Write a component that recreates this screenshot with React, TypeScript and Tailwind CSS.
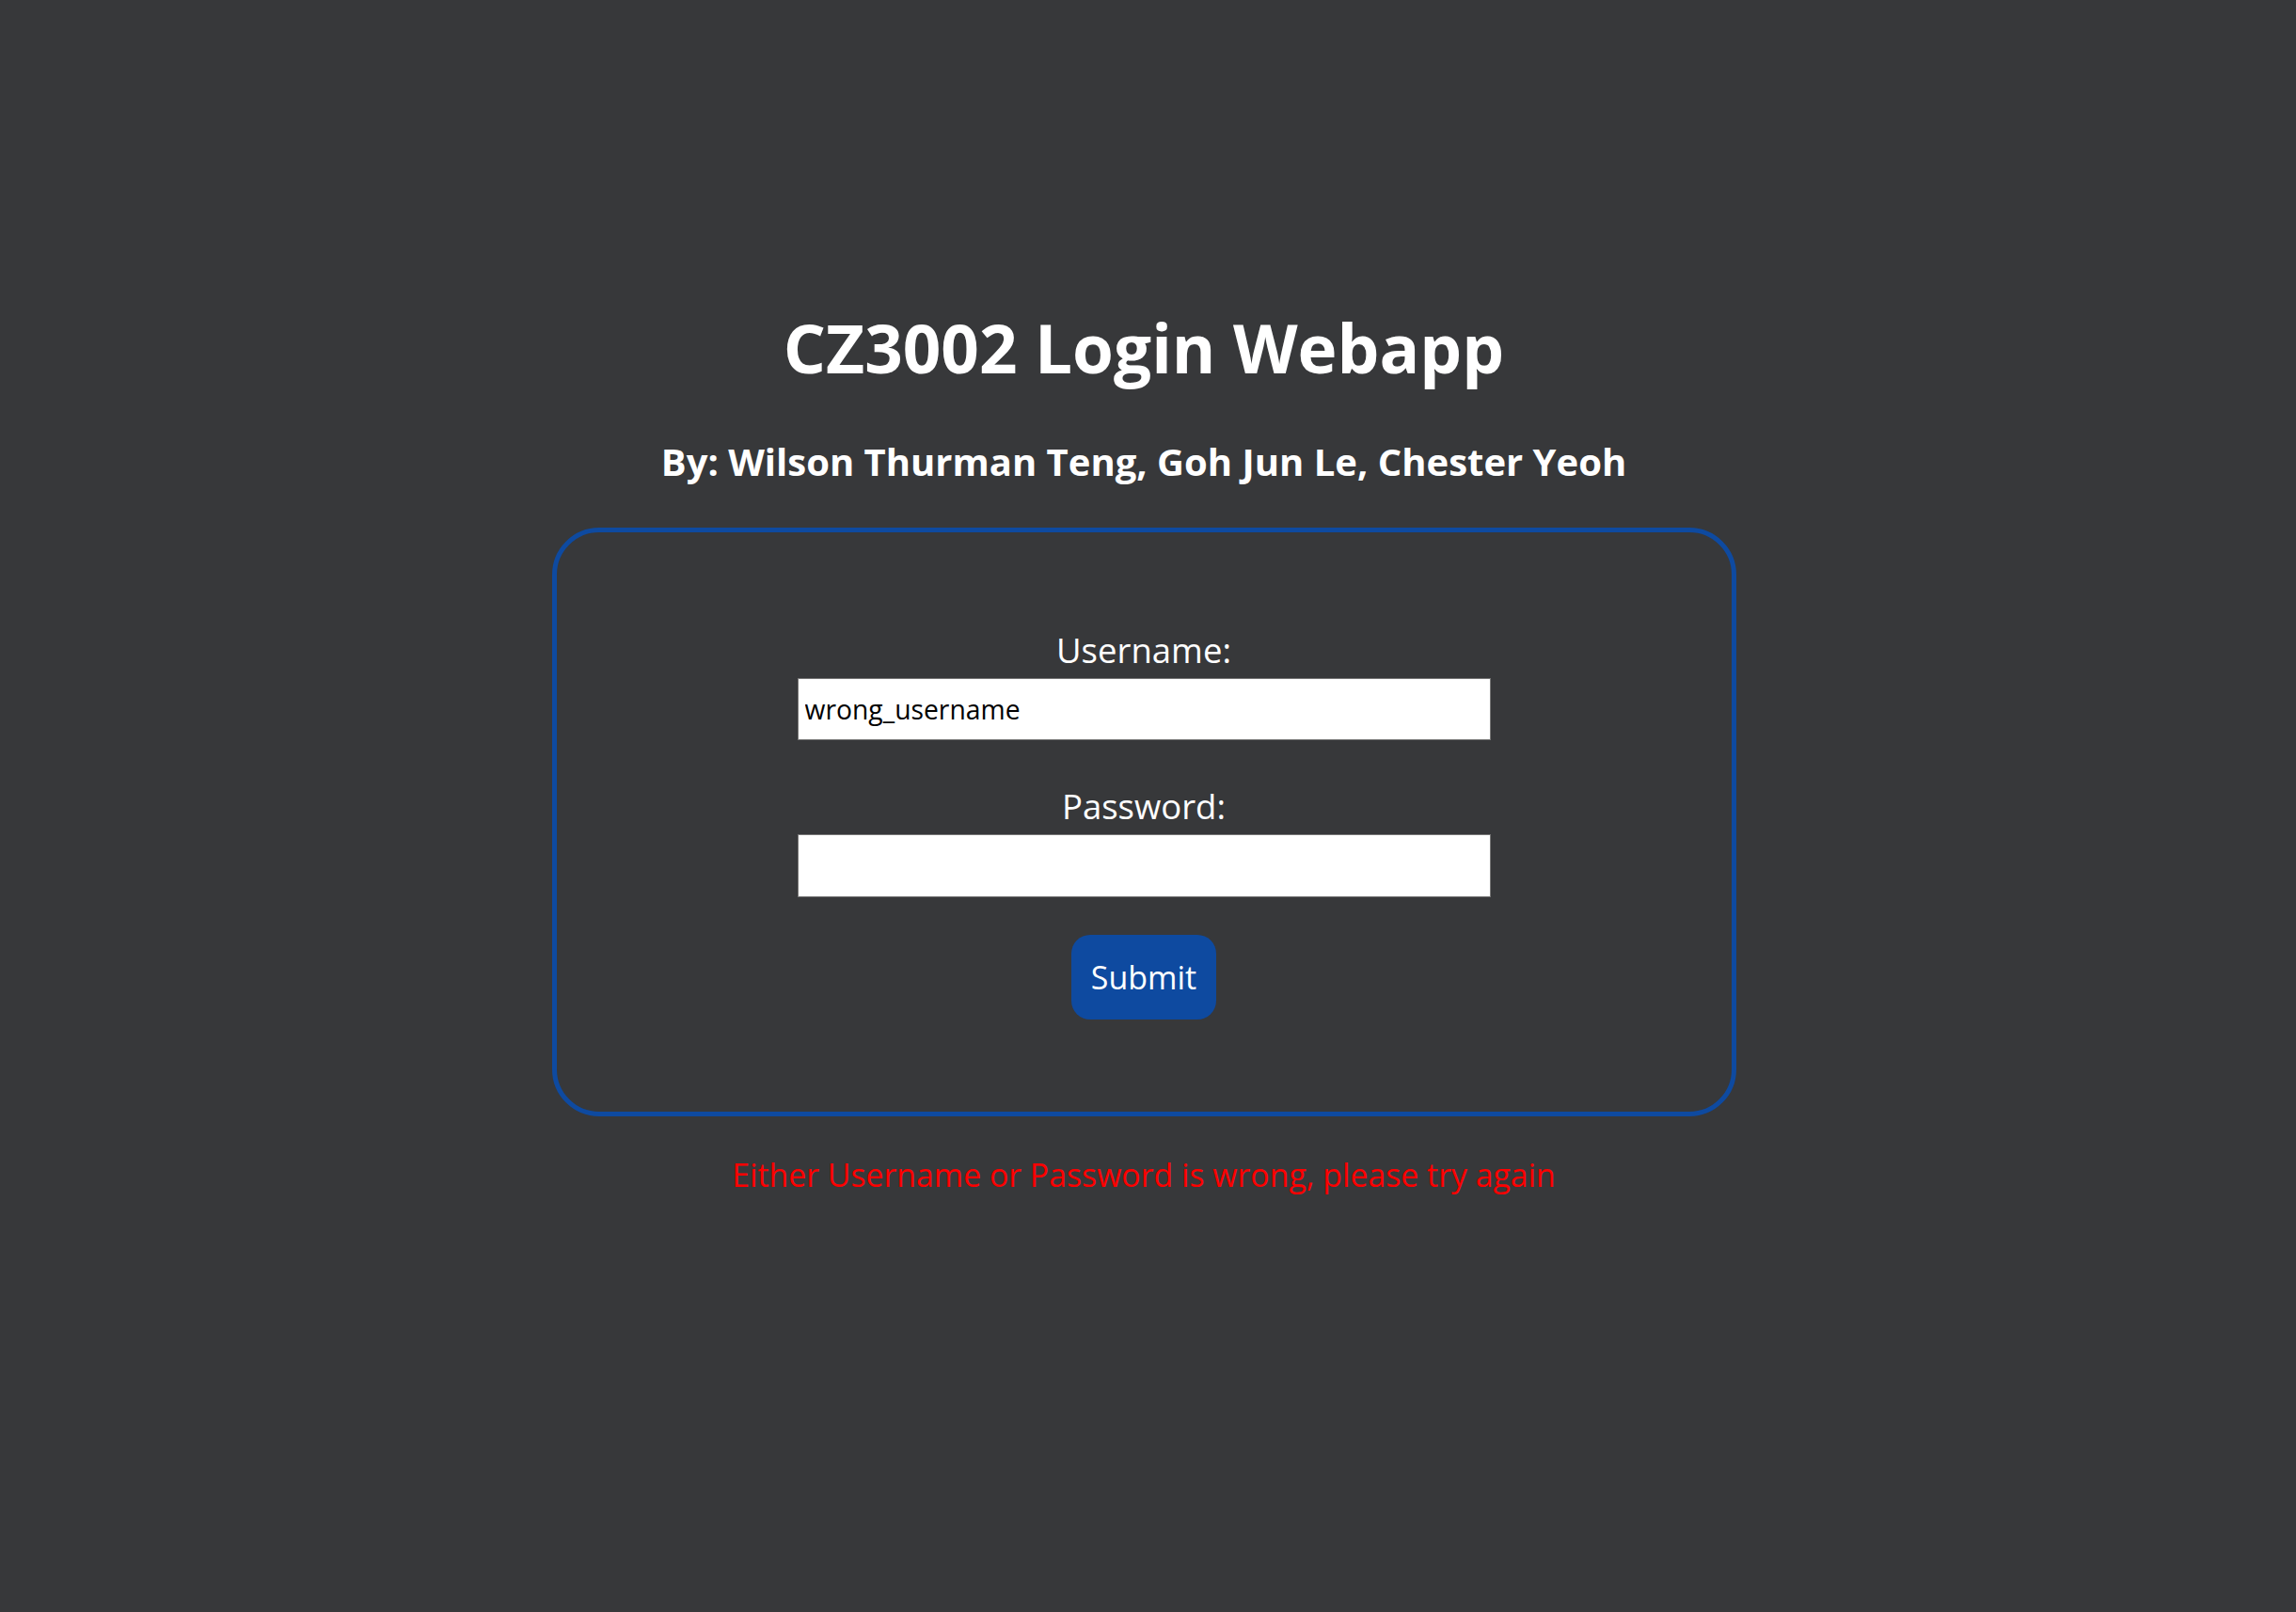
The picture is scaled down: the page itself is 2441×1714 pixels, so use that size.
import { useState } from "react";

const App: React.FC = () => {
  const [username, setUsername] = useState("wrong_username");
  const [password, setPassword] = useState("");

  return (
    <div
      className="min-h-screen bg-[#37383a] flex flex-col items-center pr-[9px] text-white"
      style={{ fontFamily: '"Open Sans", "Noto Sans", sans-serif' }}
    >
      <h1 className="mt-[330px] text-[71px] leading-[80px] font-bold">
        CZ3002 Login Webapp
      </h1>
      <h2 className="mt-[56px] text-[40px] leading-[50px] font-bold">
        By: Wilson Thurman Teng, Goh Jun Le, Chester Yeoh
      </h2>
      <form
        className="mt-[45px] w-[1259px] h-[626px] border-[5px] border-[#0e4aa0] rounded-[50px] flex flex-col items-center pt-[103px]"
        onSubmit={(e) => e.preventDefault()}
      >
        <label htmlFor="username" className="text-[36.5px] leading-[44px]">
          Username:
        </label>
        <input
          id="username"
          type="text"
          value={username}
          onChange={(e) => setUsername(e.target.value)}
          className="mt-[8px] w-[737px] h-[66px] bg-white text-black border border-[#767676] px-[7px] text-[28.3px] outline-none"
        />
        <label htmlFor="password" className="mt-[48px] text-[36.5px] leading-[44px]">
          Password:
        </label>
        <input
          id="password"
          type="password"
          value={password}
          onChange={(e) => setPassword(e.target.value)}
          className="mt-[8px] w-[737px] h-[67px] bg-white text-black border border-[#767676] px-[7px] text-[28.3px] outline-none"
        />
        <button
          type="submit"
          className="mt-[40px] w-[154px] h-[90px] bg-[#0e4aa0] rounded-[20px] text-[34px] text-white"
        >
          Submit
        </button>
      </form>
      <p className="mt-[40px] text-[33.8px] leading-[44px] text-[#ff0000]">
        Either Username or Password is wrong, please try again
      </p>
    </div>
  );
};

export default App;
